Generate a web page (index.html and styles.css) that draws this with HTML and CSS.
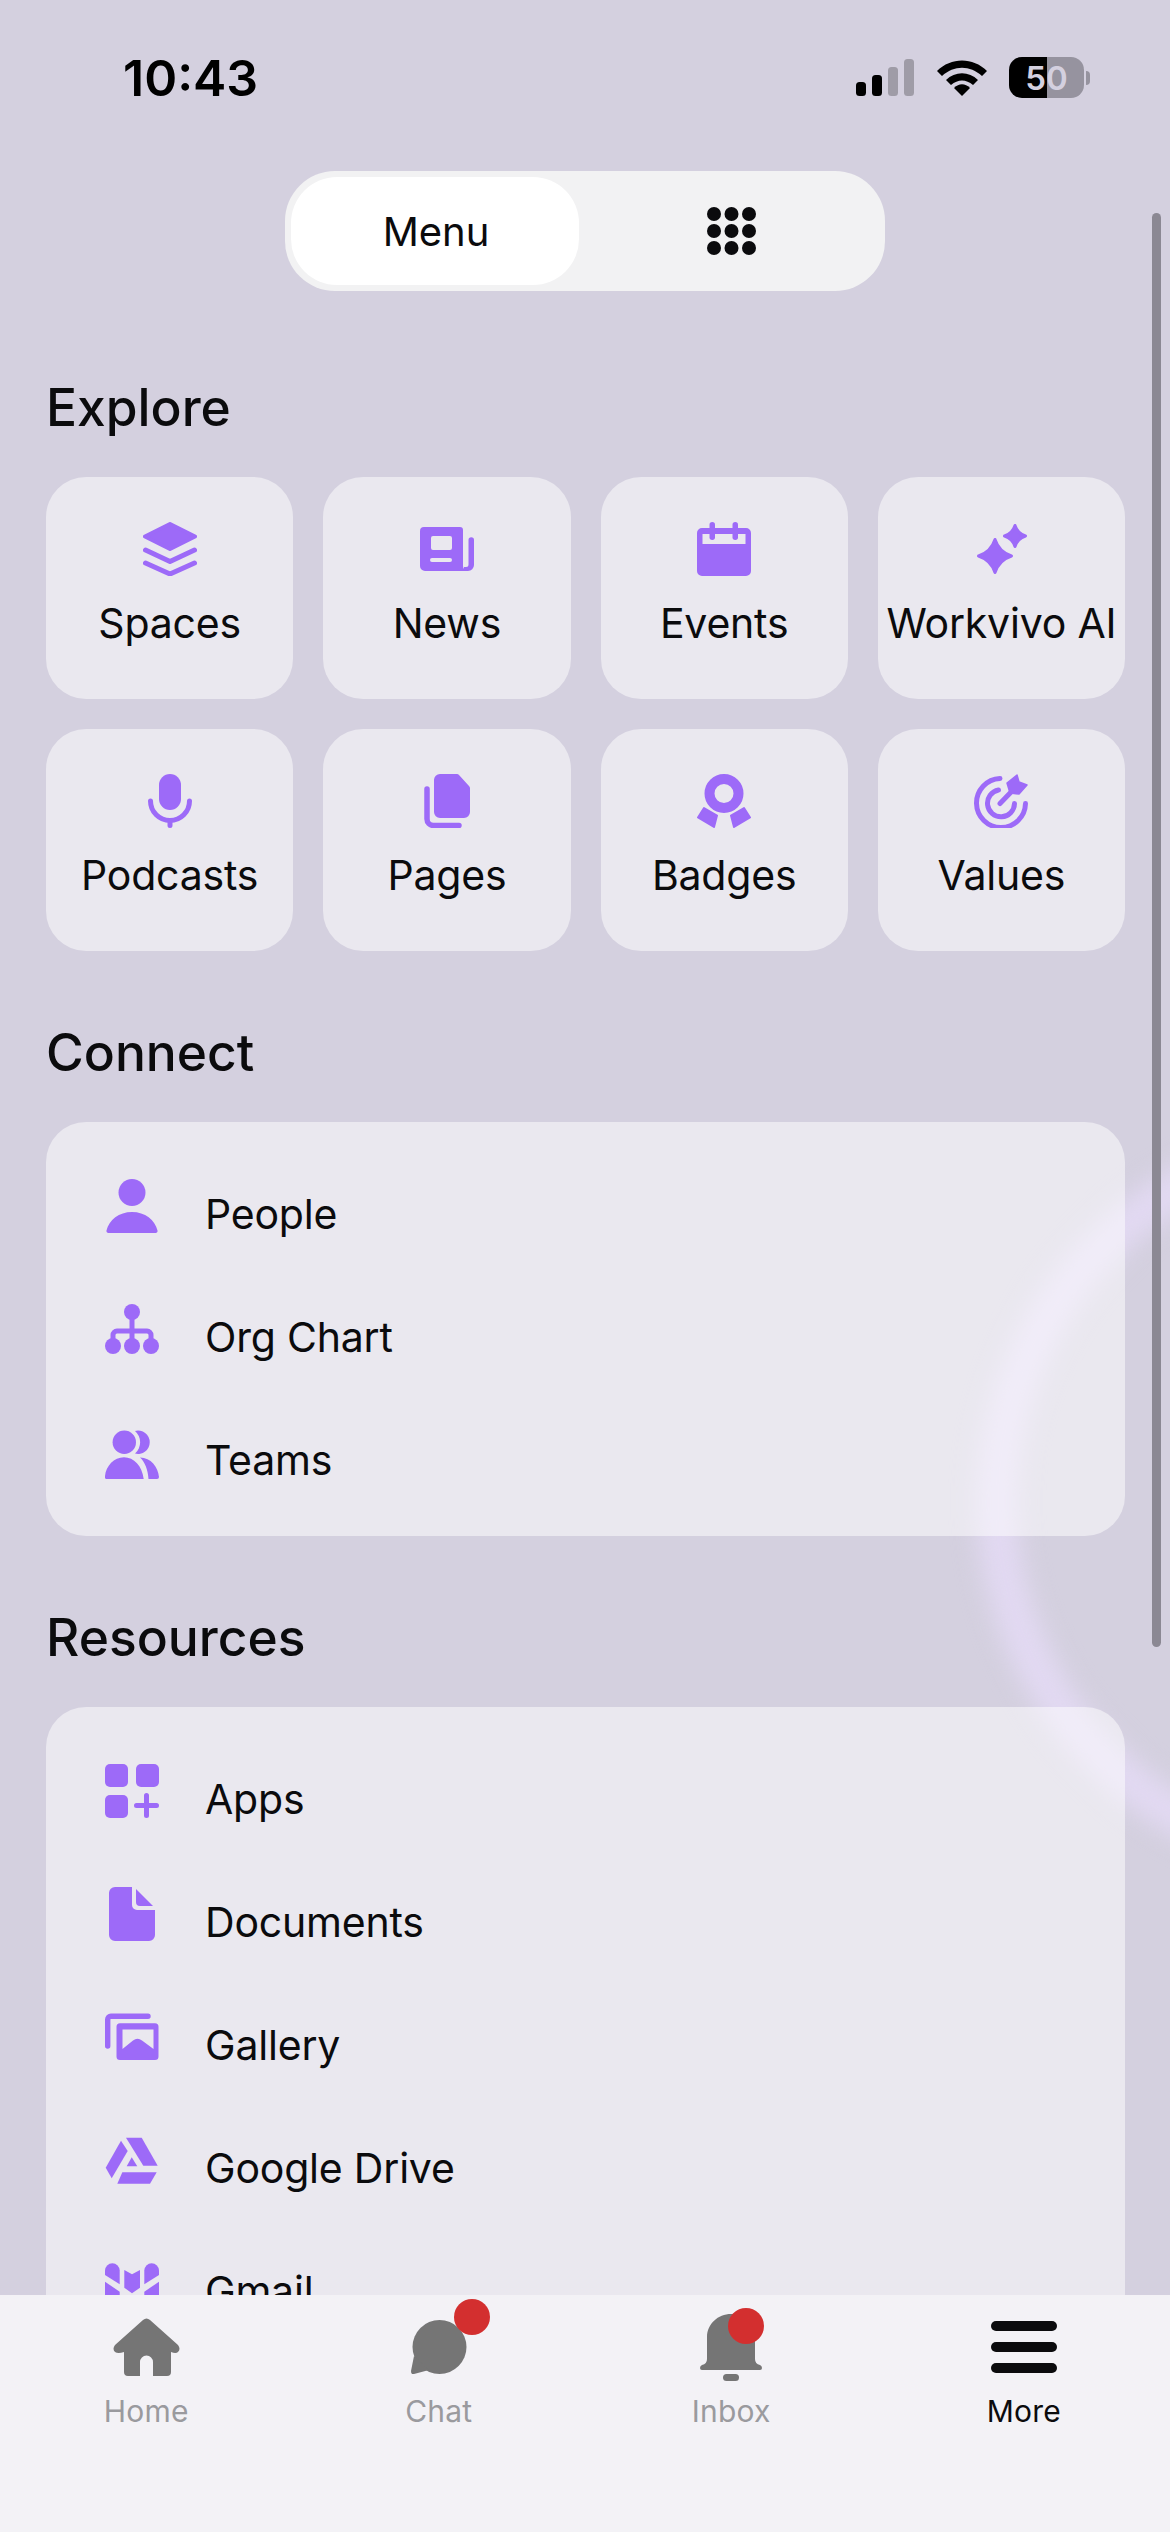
FILE: index.html
```html
<!DOCTYPE html>
<html lang="en">
<head>
  <meta charset="UTF-8" />
  <meta name="viewport" content="width=device-width, initial-scale=1.0"/>
  <title>Workvivo Menu</title>
  <link rel="stylesheet" href="styles.css">
</head>
<body>
  <div class="backdrop"><div class="ring"></div></div>
  <div class="scrollbar"></div>

  <main class="page">
    <!-- Status bar -->
    <div class="status">
      <span class="time">10:43</span>
      <div class="status-icons">
        <svg width="58" height="37" viewBox="0 0 58 37">
          <rect x="0" y="23" width="10" height="14" rx="3.5"/>
          <rect x="16" y="16" width="10" height="21" rx="3.5"/>
          <rect x="32" y="8" width="10" height="29" rx="3.5" opacity=".25"/>
          <rect x="48" y="0" width="10" height="37" rx="3.5" opacity=".25"/>
        </svg>
        <svg width="50" height="37" viewBox="0 0 50 37">
          <path d="M0 12 C14 -2 36 -2 50 12 L45 17 C33 6 17 6 5 17 Z"/>
          <path d="M9 21 C18 12 32 12 41 21 L36 26 C29 20 21 20 14 26 Z"/>
          <path d="M17 29 C22 24 28 24 33 29 L25 37 Z"/>
        </svg>
        <div class="battery">
          <div class="battery-body"><span>50</span></div>
          <div class="battery-cap"></div>
        </div>
      </div>
    </div>

    <!-- Menu / grid switch -->
    <div class="switch">
      <div class="switch-on">Menu</div>
      <div class="switch-off">
        <svg width="49" height="48" viewBox="0 0 49 48" fill="#0b0b0d">
          <circle cx="7" cy="7" r="7"/><circle cx="24.5" cy="7" r="7"/><circle cx="42" cy="7" r="7"/>
          <circle cx="7" cy="24" r="7"/><circle cx="24.5" cy="24" r="7"/><circle cx="42" cy="24" r="7"/>
          <circle cx="7" cy="41" r="7"/><circle cx="24.5" cy="41" r="7"/><circle cx="42" cy="41" r="7"/>
        </svg>
      </div>
    </div>

    <h2 class="section-title first">Explore</h2>
    <div class="tiles">
      <div class="tile">
        <svg class="icon" viewBox="0 0 54 54">
          <path d="M27 2 L52 14.5 L27 27 L2 14.5 Z" stroke="#9d6af8" stroke-width="4" stroke-linejoin="round"/>
          <path d="M2.5 28 L27 39.5 L51.5 28 M2.5 41 L27 52 L51.5 41" fill="none" stroke="#9d6af8" stroke-width="5" stroke-linecap="round" stroke-linejoin="round"/>
        </svg>
        <span>Spaces</span>
      </div>
      <div class="tile">
        <svg class="icon" viewBox="0 0 54 54">
          <path fill-rule="evenodd" d="M4 5 H40 a3 3 0 0 1 3 3 V44 a5 5 0 0 0 5 5 H5 a5 5 0 0 1-5-5 V9 a4 4 0 0 1 4-4 Z M13 14 a2 2 0 0 0-2 2 V26 a2 2 0 0 0 2 2 H30 a2 2 0 0 0 2-2 V16 a2 2 0 0 0-2-2 Z M12 36 a2 2 0 0 0 0 4 H30 a2 2 0 0 0 0-4 Z"/>
          <path d="M48.5 18 a2.75 2.75 0 0 1 5.5 0 V43 a6 6 0 0 1-6 6 H44 V45 H46 a2.5 2.5 0 0 0 2.5-2.5 Z"/>
        </svg>
        <span>News</span>
      </div>
      <div class="tile">
        <svg class="icon" viewBox="0 0 54 54">
          <path fill-rule="evenodd" d="M5 6 H49 a5 5 0 0 1 5 5 V49 a5 5 0 0 1-5 5 H5 a5 5 0 0 1-5-5 V11 a5 5 0 0 1 5-5 Z M5.5 12 V22 H48.5 V12 Z"/>
          <rect x="12.5" y="0" width="5.5" height="18" rx="2.75"/>
          <rect x="35.5" y="0" width="5.5" height="18" rx="2.75"/>
        </svg>
        <span>Events</span>
      </div>
      <div class="tile">
        <svg class="icon" viewBox="0 0 54 54">
          <path d="M21 17.5 Q25 30 37.5 34 Q25 38 21 50.5 Q17 38 4.5 34 Q17 30 21 17.5 Z" stroke="#9d6af8" stroke-width="3" stroke-linejoin="round"/>
          <path d="M41 3.5 Q43.5 11.5 51.5 14 Q43.5 16.5 41 24.5 Q38.5 16.5 30.5 14 Q38.5 11.5 41 3.5 Z" stroke="#9d6af8" stroke-width="3" stroke-linejoin="round"/>
        </svg>
        <span>Workvivo AI</span>
      </div>
      <div class="tile">
        <svg class="icon" viewBox="0 0 54 54">
          <rect x="16" y="0" width="22" height="36" rx="11"/>
          <path d="M7.5 27 a19.5 19.5 0 0 0 39 0 M27 46.5 V51.5" fill="none" stroke="#9d6af8" stroke-width="5" stroke-linecap="round"/>
        </svg>
        <span>Podcasts</span>
      </div>
      <div class="tile">
        <svg class="icon" viewBox="0 0 54 54">
          <path d="M20 0 H37 a3 3 0 0 1 2 1 L49 12 a3 3 0 0 1 1 2 V38 a6 6 0 0 1-6 6 H20 a6 6 0 0 1-6-6 V6 a6 6 0 0 1 6-6 Z"/>
          <path d="M7 15 V45 a6.5 6.5 0 0 0 6.5 6.5 H39" fill="none" stroke="#9d6af8" stroke-width="5.5" stroke-linecap="round"/>
        </svg>
        <span>Pages</span>
      </div>
      <div class="tile">
        <svg class="icon" viewBox="0 0 54 54">
          <circle cx="27" cy="19.5" r="14.5" fill="none" stroke="#9d6af8" stroke-width="10"/>
          <path d="M7 34 L20 41.5 L17 53 L1 43.5 Z M47 34 L34 41.5 L37 53 L53 43.5 Z" stroke="#9d6af8" stroke-width="2" stroke-linejoin="round"/>
        </svg>
        <span>Badges</span>
      </div>
      <div class="tile">
        <svg class="icon" viewBox="0 0 54 54">
          <path d="M26 4.5 A24.5 24.5 0 1 0 51.5 29.5 M24.5 16 A13.5 13.5 0 1 0 40.5 29.5 M26 29.5 L40 15" fill="none" stroke="#9d6af8" stroke-width="5" stroke-linecap="round"/>
          <path d="M33 9 L43 1 L45 8 L53 11 L45 20 L36 19 Z" stroke="#9d6af8" stroke-width="1.5" stroke-linejoin="round"/>
        </svg>
        <span>Values</span>
      </div>
    </div>

    <h2 class="section-title">Connect</h2>
    <div class="list">
      <div class="row">
        <svg class="icon" viewBox="0 0 54 54">
          <circle cx="27" cy="13.5" r="13.5"/>
          <path d="M1.5 51.5 C4 41 14 33 27 33 S50 41 52.5 51.5 a2 2 0 0 1-2 2.5 H3.5 a2 2 0 0 1-2-2.5 Z"/>
        </svg>
        <span>People</span>
      </div>
      <div class="row">
        <svg class="icon" viewBox="0 0 54 54">
          <circle cx="27" cy="10" r="8"/>
          <circle cx="8" cy="44" r="8"/><circle cx="27" cy="44" r="8"/><circle cx="46" cy="44" r="8"/>
          <path d="M27 14 V44 M8 44 V33 a4 4 0 0 1 4-4 H42 a4 4 0 0 1 4 4 V44" fill="none" stroke="#9d6af8" stroke-width="5"/>
        </svg>
        <span>Org Chart</span>
      </div>
      <div class="row">
        <svg class="icon" viewBox="0 0 54 54">
          <circle cx="19.3" cy="17.3" r="11.7"/>
          <path d="M0 51 C1 41 9 32.3 19 32.3 S37 41 38.7 54 H2 a2 2 0 0 1-2-3 Z"/>
          <path d="M30 6 A11.7 11.7 0 1 1 30 28.6 A15 15 0 0 0 30 6 Z"/>
          <path d="M35 32.5 C46 32.5 53 42 54 52 a2 2 0 0 1-2 2 H43.5 C43 45 40 37 35 32.5 Z"/>
        </svg>
        <span>Teams</span>
      </div>
    </div>

    <h2 class="section-title">Resources</h2>
    <div class="list">
      <div class="row">
        <svg class="icon" viewBox="0 0 54 54">
          <rect x="0" y="0" width="23" height="23" rx="5"/>
          <rect x="31" y="0" width="23" height="23" rx="5"/>
          <rect x="0" y="31" width="23" height="23" rx="5"/>
          <path d="M31.5 41.5 H51.5 M41.5 31.5 V51.5" fill="none" stroke="#9d6af8" stroke-width="5" stroke-linecap="round"/>
        </svg>
        <span>Apps</span>
      </div>
      <div class="row">
        <svg class="icon" viewBox="0 0 54 54">
          <path d="M4 6 a6 6 0 0 1 6-6 H27 V18 a5 5 0 0 0 5 5 H50 V48 a6 6 0 0 1-6 6 H10 a6 6 0 0 1-6-6 Z"/>
          <path d="M31 2 L48 19 H35 a4 4 0 0 1-4-4 Z"/>
        </svg>
        <span>Documents</span>
      </div>
      <div class="row">
        <svg class="icon" viewBox="0 0 54 54">
          <path d="M2.7 36 V9.5 a3.2 3.2 0 0 1 3.2-3.2 H43" fill="none" stroke="#9d6af8" stroke-width="5.4" stroke-linecap="round"/>
          <path fill-rule="evenodd" d="M15 13.3 H50 a3.5 3.5 0 0 1 3.5 3.5 V46.5 a3.5 3.5 0 0 1-3.5 3.5 H15 a3.5 3.5 0 0 1-3.5-3.5 V16.8 a3.5 3.5 0 0 1 3.5-3.5 Z M17.5 19.5 V39 L28 30.5 Q32.5 27 37 30.5 L48.5 39 V19.5 Z"/>
        </svg>
        <span>Gallery</span>
      </div>
      <div class="row">
        <svg class="icon" viewBox="0 0 54 54">
          <path d="M16 7.7 L22.7 18 L6.7 45.3 L0.7 34.7 Z"/>
          <path d="M21 4.7 H36.7 L52.7 32.7 H38.3 Z"/>
          <path d="M26.7 24.3 L32.3 33.3 H21.7 Z"/>
          <path d="M17.3 39.3 H51.7 L45 50.7 H12.3 Z"/>
        </svg>
        <span>Google Drive</span>
      </div>
      <div class="row">
        <svg class="icon" viewBox="0 0 54 54">
          <path d="M0 14.6 a7.35 7.35 0 0 1 14.7 0 V28.3 L0 19 Z"/>
          <path d="M39.3 14.6 a7.35 7.35 0 0 1 14.7 0 V19 L39.3 28.3 Z"/>
          <path d="M0 25.7 L14.7 35.7 V54 H0 Z"/>
          <path d="M54 25.7 L39.3 35.7 V54 H54 Z"/>
          <path d="M19.3 14 L27 18.3 L35 14 V31.7 L27 37.3 L19.3 31.7 Z"/>
        </svg>
        <span>Gmail</span>
      </div>
    </div>
  </main>

  <!-- Bottom tabs -->
  <nav class="tabbar">
    <div class="tab">
      <div class="tab-icon">
        <svg width="67" height="58" viewBox="0 0 67 58" fill="#757575">
          <path d="M30 2 Q33.5 -1 37 2 L65 27 Q68 31 65 34 Q63 36 58 34 V54 a4 4 0 0 1-4 4 H40 V44 a6.5 6.5 0 0 0-13 0 V58 H15 a4 4 0 0 1-4-4 V34 Q5 36 2 34 Q-1 31 2 27 Z"/>
        </svg>
      </div>
      <span>Home</span>
    </div>
    <div class="tab">
      <div class="tab-icon">
        <svg width="56" height="54" viewBox="0 0 56 54" fill="#757575">
          <circle cx="28.5" cy="27" r="27"/>
          <path d="M3 36 L0 51 Q0 55 3 54 L18 50 Z"/>
        </svg>
        <i class="dot dot-chat"></i>
      </div>
      <span>Chat</span>
    </div>
    <div class="tab">
      <div class="tab-icon">
        <svg width="62" height="67" viewBox="0 0 62 67" fill="#757575">
          <path d="M31 0 C18 0 7 10 7 23 V45 Q7 50 2 51 Q0 52 0 54 Q0 56 2 56 H60 Q62 56 62 54 Q62 52 60 51 Q55 50 55 45 V23 C55 10 44 0 31 0 Z"/>
          <rect x="23" y="60" width="16" height="7" rx="3.5"/>
        </svg>
        <i class="dot dot-inbox"></i>
      </div>
      <span>Inbox</span>
    </div>
    <div class="tab active">
      <div class="tab-icon">
        <svg width="66" height="52" viewBox="0 0 66 52" fill="#0b0b0d">
          <rect x="0" y="0" width="66" height="10" rx="5"/>
          <rect x="0" y="21" width="66" height="10" rx="5"/>
          <rect x="0" y="42" width="66" height="10" rx="5"/>
        </svg>
      </div>
      <span>More</span>
    </div>
  </nav>
</body>
</html>
```

FILE: styles.css
```css
* {
  box-sizing: border-box;
}
html, body {
  margin: 0;
  padding: 0;
}
body {
  position: relative;
  width: 1170px;
  height: 2532px;
  overflow: hidden;
  display: flex;
  flex-direction: column;
  background-color: #d4d0df;
  font-family: Inter, "Noto Sans", sans-serif;
  color: #0b0b0d;
}

/* blurred circle behind the cards */
.backdrop {
  position: absolute;
  top: 0;
  left: 0;
  width: 1170px;
  height: 2532px;
  overflow: hidden;
}
.ring {
  position: absolute;
  left: 977px;
  top: 1120px;
  width: 764px;
  height: 764px;
  border: 40px solid #e2d9f2;
  border-radius: 50%;
  filter: blur(12px);
}
.scrollbar {
  position: absolute;
  left: 1152px;
  top: 213px;
  width: 9px;
  height: 1434px;
  border-radius: 5px;
  background-color: #8b8893;
  z-index: 2;
}

.page {
  position: relative;
  height: 2295px;
  flex: none;
  overflow: hidden;
  padding: 0 45px 0 46px;
}

/* status bar */
.status {
  height: 171px;
  display: flex;
  justify-content: space-between;
  align-items: flex-start;
  margin-right: 35px;
  padding: 48px 0 0 77px;
}
.time {
  font-size: 50px;
  line-height: 60px;
  font-weight: 600;
  color: #000;
}
.status-icons {
  display: flex;
  align-items: center;
  gap: 23px;
  padding-top: 9px;
  color: #000;
}
.status-icons svg {
  fill: #000;
}
.battery {
  display: flex;
  align-items: center;
  gap: 2px;
  margin-left: -1px;
}
.battery-body {
  width: 75px;
  height: 41px;
  border-radius: 13px;
  background: linear-gradient(to right, #000 50.5%, #96939f 50.5%);
  display: flex;
  align-items: center;
  justify-content: center;
}
.battery-body span {
  font-size: 33px;
  font-weight: 600;
  color: #d4d0df;
}
.battery-cap {
  width: 4px;
  height: 14px;
  border-radius: 0 4px 4px 0;
  background-color: #96939f;
}

/* switch */
.switch {
  width: 600px;
  height: 120px;
  margin-left: 239px;
  padding: 6px;
  display: flex;
  align-items: stretch;
  border-radius: 50px;
  background-color: #f2f2f3;
}
.switch-on {
  width: 288px;
  padding-left: 2px;
  border-radius: 46px;
  background-color: #fff;
  display: flex;
  align-items: center;
  justify-content: center;
  font-size: 40px;
}
.switch-off {
  flex: 1;
  display: flex;
  align-items: center;
  justify-content: center;
  padding-left: 5px;
}

.section-title {
  margin: 71px 0 40px;
  font-size: 51.5px;
  line-height: 60px;
  font-weight: 500;
}
.section-title.first {
  margin-top: 86px;
  margin-bottom: 40px;
}

.icon {
  width: 54px;
  height: 54px;
  flex: none;
  fill: #9d6af8;
}

/* explore grid */
.tiles {
  display: grid;
  grid-template-columns: repeat(4, 1fr);
  gap: 30px;
}
.tile {
  height: 222px;
  padding-top: 45px;
  display: flex;
  flex-direction: column;
  align-items: center;
  border-radius: 40px;
  background-color: rgba(255, 255, 255, 0.5);
  font-size: 41px;
  line-height: 36px;
  letter-spacing: -0.2px;
  white-space: nowrap;
}
.tile span {
  margin-top: 29px;
}

/* lists */
.list {
  display: flex;
  flex-direction: column;
  gap: 69px;
  padding: 57px 59px 57px;
  border-radius: 40px;
  background-color: rgba(255, 255, 255, 0.5);
}
.row {
  display: flex;
  align-items: flex-start;
  gap: 46px;
  height: 54px;
  font-size: 41px;
  line-height: 36px;
  letter-spacing: -0.2px;
}
.row span {
  margin-top: 17px;
}

/* bottom tabs */
.tabbar {
  position: relative;
  flex: 1;
  display: grid;
  grid-template-columns: repeat(4, 1fr);
  align-items: start;
  padding-top: 19px;
  background-color: #f3f2f6;
}
.tab {
  display: flex;
  flex-direction: column;
  align-items: center;
  font-size: 30px;
  line-height: 36px;
  letter-spacing: 0.2px;
  color: #9a9a9e;
}
.tab span {
  margin-top: 13px;
}
.tab.active {
  color: #0b0b0d;
}
.tab-icon {
  position: relative;
  height: 66px;
  display: flex;
  align-items: center;
  justify-content: center;
}
.dot {
  position: absolute;
  width: 36px;
  height: 36px;
  border-radius: 50%;
  background-color: #d32f2f;
}
.dot-chat {
  right: -23px;
  top: -15px;
}
.dot-inbox {
  right: -2px;
  top: -6px;
}
```
